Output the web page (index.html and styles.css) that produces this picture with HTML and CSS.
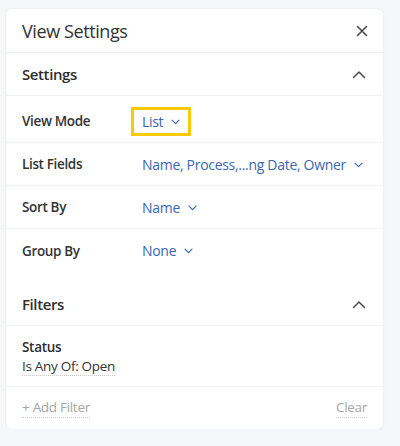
FILE: index.html
```html
<!DOCTYPE html>
<html lang="en">
<head>
<meta charset="utf-8">
<title>View Settings</title>
<link rel="stylesheet" href="styles.css">
</head>
<body>
<div class="panel">
  <div class="panel-header">
    <h1 class="panel-title">View Settings</h1>
    <button class="icon-btn close-btn" aria-label="Close">
      <svg width="12" height="12" viewBox="0 0 12 12"><path d="M1.5 1.5 L10.5 10.5 M10.5 1.5 L1.5 10.5" stroke="#4a4a4a" stroke-width="1.6" stroke-linecap="round" fill="none"/></svg>
    </button>
  </div>

  <div class="section">
    <div class="section-header">
      <span class="section-title">Settings</span>
      <svg class="chev-up" width="14" height="9" viewBox="0 0 14 9"><path d="M1.5 7.5 L7 2 L12.5 7.5" stroke="#4a4a4a" stroke-width="1.5" stroke-linecap="round" stroke-linejoin="round" fill="none"/></svg>
    </div>
    <div class="row row-first">
      <span class="row-label">View Mode</span>
      <span class="dropdown focused">List <svg class="chev" width="9" height="6" viewBox="0 0 9 6"><path d="M1 1.2 L4.5 4.7 L8 1.2" stroke="#3a67b1" stroke-width="1.2" stroke-linecap="round" stroke-linejoin="round" fill="none"/></svg></span>
    </div>
    <div class="row">
      <span class="row-label">List Fields</span>
      <span class="dropdown">Name, Process,...ng Date, Owner <svg class="chev" width="9" height="6" viewBox="0 0 9 6"><path d="M1 1.2 L4.5 4.7 L8 1.2" stroke="#3a67b1" stroke-width="1.2" stroke-linecap="round" stroke-linejoin="round" fill="none"/></svg></span>
    </div>
    <div class="row">
      <span class="row-label">Sort By</span>
      <span class="dropdown">Name <svg class="chev" width="9" height="6" viewBox="0 0 9 6"><path d="M1 1.2 L4.5 4.7 L8 1.2" stroke="#3a67b1" stroke-width="1.2" stroke-linecap="round" stroke-linejoin="round" fill="none"/></svg></span>
    </div>
    <div class="row row-last">
      <span class="row-label">Group By</span>
      <span class="dropdown">None <svg class="chev" width="9" height="6" viewBox="0 0 9 6"><path d="M1 1.2 L4.5 4.7 L8 1.2" stroke="#3a67b1" stroke-width="1.2" stroke-linecap="round" stroke-linejoin="round" fill="none"/></svg></span>
    </div>
  </div>

  <div class="section">
    <div class="section-header">
      <span class="section-title">Filters</span>
      <svg class="chev-up" width="14" height="9" viewBox="0 0 14 9"><path d="M1.5 7.5 L7 2 L12.5 7.5" stroke="#4a4a4a" stroke-width="1.5" stroke-linecap="round" stroke-linejoin="round" fill="none"/></svg>
    </div>
    <div class="filter">
      <div class="filter-name">Status</div>
      <div class="filter-value"><span class="dotted">Is Any Of: Open</span></div>
    </div>
    <div class="filter-footer">
      <span class="dotted muted">+ Add Filter</span>
      <span class="dotted muted">Clear</span>
    </div>
  </div>
</div>
</body>
</html>
```

FILE: styles.css
```css
* { box-sizing: border-box; }

html, body {
  margin: 0;
  padding: 0;
}

body {
  background: #f6f7f9;
  font-family: "Open Sans", "Noto Sans", sans-serif;
  color: #2b2b2b;
  padding: 9px 0 0 6px;
}

.panel {
  width: 377px;
  background: #ffffff;
  border-radius: 6px;
  box-shadow: 0 0 0 1px #eef0f2, 0 1px 3px rgba(0, 0, 0, 0.04);
}

.panel-header {
  height: 44px;
  padding: 0 15px 0 16px;
  display: flex;
  align-items: center;
  justify-content: space-between;
  border-bottom: 1px solid #eceef0;
}

.panel-title {
  margin: 0;
  font-size: 18px;
  font-weight: 400;
  letter-spacing: -0.4px;
  color: #333333;
}

.icon-btn {
  border: 0;
  background: none;
  padding: 0;
  display: flex;
  align-items: center;
}

.section-header {
  height: 43px;
  padding: 0 17px 0 16px;
  display: flex;
  align-items: center;
  justify-content: space-between;
  border-bottom: 1px solid #f0f1f3;
}

.section-title {
  font-size: 15px;
  font-weight: 600;
  letter-spacing: -0.4px;
  color: #2e2e2e;
}

.row {
  height: 43px;
  padding: 0 16px;
  display: grid;
  grid-template-columns: 120px 1fr;
  align-items: center;
  border-bottom: 1px solid #f0f1f3;
}

.row-first {
  height: 47px;
  padding-top: 4px;
}

.row-last {
  border-bottom: 0;
  margin-bottom: 11px;
}

.row-label {
  font-size: 13.5px;
  font-weight: 600;
  letter-spacing: -0.35px;
  color: #333333;
}

.dropdown {
  justify-self: start;
  display: inline-flex;
  align-items: center;
  gap: 8px;
  font-size: 14px;
  font-weight: 500;
  letter-spacing: -0.3px;
  color: #3a67b1;
  padding: 2px 8px;
  margin-left: -8px;
  line-height: 19px;
  white-space: nowrap;
}

.dropdown.focused {
  outline: 3px solid #fcc800;
}

.chev {
  margin-top: 1px;
}

.filter {
  padding: 12px 16px 10px;
  border-bottom: 1px solid #f0f1f3;
  height: 61px;
}

.filter-name {
  font-size: 13.5px;
  font-weight: 600;
  letter-spacing: -0.3px;
  color: #2e2e2e;
  line-height: 19px;
}

.filter-value {
  font-size: 13.5px;
  letter-spacing: -0.3px;
  color: #333333;
  line-height: 19px;
}

.dotted {
  border-bottom: 1px dotted #c9c9c9;
}

.filter-footer {
  height: 42px;
  padding: 0 16px;
  display: flex;
  align-items: center;
  justify-content: space-between;
  font-size: 13.5px;
  letter-spacing: -0.3px;
  line-height: 19px;
}

.muted {
  color: #a6a6a6;
}
```
